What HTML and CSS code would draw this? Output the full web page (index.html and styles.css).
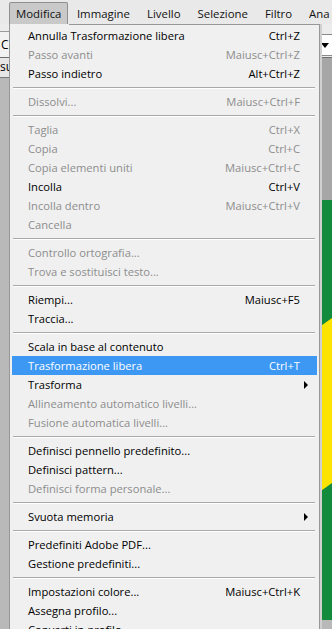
FILE: index.html
```html
<!DOCTYPE html>
<html lang="it">
<head>
    <meta charset="UTF-8">
    <title>Modifica</title>
    <link rel="stylesheet" href="styles.css">
</head>
<body>
    <div class="app">
        <nav class="menubar">
            <span class="menubar-item active">Modifica</span>
            <span class="menubar-item">Immagine</span>
            <span class="menubar-item">Livello</span>
            <span class="menubar-item">Selezione</span>
            <span class="menubar-item">Filtro</span>
            <span class="menubar-item">Ana</span>
        </nav>

        <div class="optionsbar">
            <div class="tool-box">C</div>
            <div class="select-box"><span class="select-arrow"></span></div>
        </div>

        <div class="workspace">
            <div class="left-panel">
                <div class="doc-tab">su</div>
            </div>
            <div class="canvas">
                <div class="canvas-top"></div>
                <svg class="flag" width="14" height="420" viewBox="0 0 14 420">
                    <rect x="0" y="0" width="14" height="420" fill="#128b3d"/>
                    <polygon points="0,128 14,118 14,283 0,293" fill="#fde400"/>
                </svg>
            </div>
        </div>
    </div>

    <!-- menu Modifica aperto -->
    <div class="menu">
        <div class="item"><span>Annulla Trasformazione libera</span><span class="key">Ctrl+Z</span></div>
        <div class="item off"><span>Passo avanti</span><span class="key">Maiusc+Ctrl+Z</span></div>
        <div class="item"><span>Passo indietro</span><span class="key">Alt+Ctrl+Z</span></div>
        <div class="sep"></div>
        <div class="item off"><span>Dissolvi...</span><span class="key">Maiusc+Ctrl+F</span></div>
        <div class="sep"></div>
        <div class="item off"><span>Taglia</span><span class="key">Ctrl+X</span></div>
        <div class="item off"><span>Copia</span><span class="key">Ctrl+C</span></div>
        <div class="item off"><span>Copia elementi uniti</span><span class="key">Maiusc+Ctrl+C</span></div>
        <div class="item"><span>Incolla</span><span class="key">Ctrl+V</span></div>
        <div class="item off"><span>Incolla dentro</span><span class="key">Maiusc+Ctrl+V</span></div>
        <div class="item off"><span>Cancella</span></div>
        <div class="sep"></div>
        <div class="item off"><span>Controllo ortografia...</span></div>
        <div class="item off"><span>Trova e sostituisci testo...</span></div>
        <div class="sep"></div>
        <div class="item"><span>Riempi...</span><span class="key">Maiusc+F5</span></div>
        <div class="item"><span>Traccia...</span></div>
        <div class="sep"></div>
        <div class="item"><span>Scala in base al contenuto</span></div>
        <div class="item selected"><span>Trasformazione libera</span><span class="key">Ctrl+T</span></div>
        <div class="item sub"><span>Trasforma</span></div>
        <div class="item off"><span>Allineamento automatico livelli...</span></div>
        <div class="item off"><span>Fusione automatica livelli...</span></div>
        <div class="sep"></div>
        <div class="item"><span>Definisci pennello predefinito...</span></div>
        <div class="item"><span>Definisci pattern...</span></div>
        <div class="item off"><span>Definisci forma personale...</span></div>
        <div class="sep"></div>
        <div class="item sub"><span>Svuota memoria</span></div>
        <div class="sep"></div>
        <div class="item"><span>Predefiniti Adobe PDF...</span></div>
        <div class="item"><span>Gestione predefiniti...</span></div>
        <div class="sep"></div>
        <div class="item"><span>Impostazioni colore...</span><span class="key">Maiusc+Ctrl+K</span></div>
        <div class="item"><span>Assegna profilo...</span></div>
        <div class="item"><span>Converti in profilo...</span></div>
    </div>
</body>
</html>
```

FILE: styles.css
```css
body {
    margin: 0;
    font-family: 'Segoe UI', 'Open Sans', sans-serif;
    font-size: 11.2px;
    color: #000;
    overflow: hidden;
    height: 629px;
    position: relative;
}

.app {
    height: 629px;
    display: flex;
    flex-direction: column;
    background-color: #b9b9b9;
}

/* barra menu */
.menubar {
    height: 24px;
    display: flex;
    align-items: flex-end;
    padding-left: 9px;
    background-color: #e9e9e9;
    white-space: nowrap;
    overflow: hidden;
}

.menubar-item {
    height: 22px;
    line-height: 21px;
    padding: 0 7.5px;
    font-size: 11.4px;
    color: #111;
    box-sizing: border-box;
    border: 1px solid transparent;
    border-bottom: none;
}

.menubar-item.active {
    width: 60px;
    padding: 0 6px;
    background-color: #c9c9c9;
    border-color: #8f8f8f;
    border-radius: 2px 2px 0 0;
}

/* barra opzioni */
.optionsbar {
    height: 33px;
    display: flex;
    justify-content: space-between;
    align-items: flex-end;
    background-color: #ececec;
}

.tool-box {
    width: 12px;
    height: 26px;
    box-sizing: border-box;
    border: 1px solid #9a9a9a;
    border-left: none;
    border-bottom: none;
    font-size: 12px;
    line-height: 26px;
    text-indent: 1px;
    background-color: #f2f2f2;
}

.select-box {
    width: 14px;
    height: 22px;
    margin-bottom: 1px;
    box-sizing: border-box;
    border: 1px solid #8a8a8a;
    border-right: none;
    background-color: #fff;
    position: relative;
}

.select-arrow {
    position: absolute;
    left: 2px;
    top: 8px;
    border-left: 4px solid transparent;
    border-right: 4px solid transparent;
    border-top: 5px solid #000;
}

/* area di lavoro */
.workspace {
    flex: 1;
    display: flex;
    justify-content: space-between;
    border-top: 1px solid #6f6f6f;
}

.left-panel {
    width: 12px;
    display: flex;
    flex-direction: column;
}

.doc-tab {
    height: 19px;
    line-height: 18px;
    font-size: 12px;
    background-color: #e6e6e6;
    border-bottom: 1px solid #7a7a7a;
    overflow: hidden;
    white-space: nowrap;
}

.canvas {
    width: 14px;
    display: flex;
    flex-direction: column;
}

.canvas-top {
    height: 142px;
    background-color: #a6a6a6;
}

.flag {
    display: block;
}

/* menu a tendina */
.menu {
    position: absolute;
    left: 9px;
    top: 24px;
    width: 311px;
    height: 620px;
    box-sizing: border-box;
    padding: 2px 2px 0 2px;
    background-color: #f0f0f0;
    border: 1px solid #979797;
    border-top: none;
    box-shadow: 2px 0 0 #d0d0d0;
    overflow: hidden;
}

.menu::before {
    content: "";
    position: absolute;
    left: 59px;
    right: 0;
    top: 0;
    border-top: 1px solid #979797;
}

.item {
    height: 19px;
    line-height: 19px;
    display: flex;
    justify-content: space-between;
    padding: 0 17px 0 16px;
    white-space: nowrap;
    position: relative;
}

.item.off {
    color: #8d8d8d;
}

.item.selected {
    background-color: #3d98f4;
    color: #fff;
}

.item.sub::after {
    content: "";
    position: absolute;
    right: 9px;
    top: 6px;
    border-top: 4px solid transparent;
    border-bottom: 4px solid transparent;
    border-left: 4px solid #000;
}

.sep {
    height: 0;
    margin: 4px 2px 3px 1px;
    border-top: 1px solid #a9a9a9;
    border-bottom: 1px solid #fff;
}
```
